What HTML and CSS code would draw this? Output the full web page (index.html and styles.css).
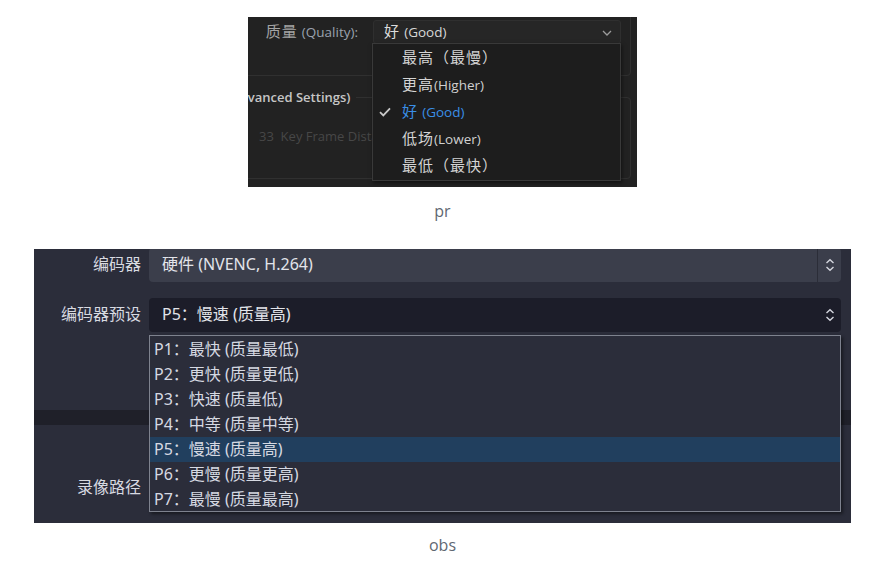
FILE: index.html
```html
<!DOCTYPE html>
<html lang="zh">
<head>
<meta charset="utf-8">
<title>pr / obs</title>
<link rel="stylesheet" href="styles.css">
</head>
<body>
<div class="page">

  <div class="pr-shot">
    <div class="pr-group">
      <div class="pr-row">
        <span class="pr-label"><span class="cjk">质量</span> <span class="lat">(Quality):</span></span>
        <div class="pr-select">
          <span><span class="cjk">好</span> <span class="lat">(Good)</span></span>
          <svg class="pr-chev" width="10" height="6" viewBox="0 0 10 6"><path d="M1 1 L5 5 L9 1" fill="none" stroke="#9c9c9c" stroke-width="1.3"/></svg>
        </div>
      </div>
    </div>
    <div class="pr-adv">
      <span class="pr-legend">(Advanced Settings)</span>
      <div class="pr-adv-row">33&nbsp; Key Frame Distance</div>
    </div>

    <ul class="pr-menu">
      <li><span class="cjk">最高（最慢）</span></li>
      <li><span class="cjk">更高</span><span class="lat">(Higher)</span></li>
      <li class="sel">
        <svg class="pr-check" width="12" height="10" viewBox="0 0 12 10"><path d="M1 5.2 L4.3 8.4 L11 1.4" fill="none" stroke="#c8c8c8" stroke-width="1.8"/></svg>
        <span class="cjk">好</span> <span class="lat">(Good)</span>
      </li>
      <li><span class="cjk">低场</span><span class="lat">(Lower)</span></li>
      <li><span class="cjk">最低（最快）</span></li>
    </ul>
  </div>

  <div class="caption cap-pr">pr</div>

  <div class="obs-shot">
    <div class="obs-form">
      <div class="obs-row obs-row1">
        <span class="obs-label">编码器</span>
        <div class="obs-field obs-field-light">
          <span class="obs-value">硬件 (NVENC, H.264)</span>
          <span class="obs-btn obs-btn-sep">
            <svg width="10" height="14" viewBox="0 0 10 14"><path d="M1.5 5 L5 1.8 L8.5 5 M1.5 9 L5 12.2 L8.5 9" fill="none" stroke="#d4d6de" stroke-width="1.4"/></svg>
          </span>
        </div>
      </div>
      <div class="obs-row obs-row2">
        <span class="obs-label">编码器预设</span>
        <div class="obs-field obs-field-dark">
          <span class="obs-value">P5：慢速 (质量高)</span>
          <span class="obs-btn">
            <svg width="10" height="14" viewBox="0 0 10 14"><path d="M1.5 5 L5 1.8 L8.5 5 M1.5 9 L5 12.2 L8.5 9" fill="none" stroke="#d4d6de" stroke-width="1.4"/></svg>
          </span>
        </div>
      </div>
      <div class="obs-band"></div>
      <div class="obs-row obs-row3">
        <span class="obs-label">录像路径</span>
        <div class="obs-field obs-field-dark"></div>
      </div>
    </div>

    <ul class="obs-list">
      <li>P1：最快 (质量最低)</li>
      <li>P2：更快 (质量更低)</li>
      <li>P3：快速 (质量低)</li>
      <li>P4：中等 (质量中等)</li>
      <li class="sel">P5：慢速 (质量高)</li>
      <li>P6：更慢 (质量更高)</li>
      <li>P7：最慢 (质量最高)</li>
    </ul>
  </div>

  <div class="caption cap-obs">obs</div>

</div>
</body>
</html>
```

FILE: styles.css
```css
* { box-sizing: border-box; }

html, body {
  margin: 0;
  padding: 0;
  background: #ffffff;
}

.page {
  display: flex;
  flex-direction: column;
  align-items: center;
  padding-left: 14px;
  padding-top: 17px;
}

/* ---------- PR screenshot ---------- */
.pr-shot {
  position: relative;
  width: 389px;
  height: 170px;
  background: #222222;
  overflow: hidden;
  font-family: "Open Sans", "Noto Sans CJK SC", sans-serif;
  color: #a8a8a8;
}

.pr-shot .cjk {
  font-family: "Noto Sans CJK SC", sans-serif;
  font-size: 15px;
  letter-spacing: 1px;
}

.pr-shot .lat {
  font-family: "Open Sans", sans-serif;
  font-size: 13.5px;
}

.pr-group {
  margin: -10px 0 0 -10px;
  width: 393px;
  height: 69px;
  border: 1px solid #303030;
  border-radius: 4px;
  padding-top: 12px;
}

.pr-row {
  display: flex;
  align-items: center;
}

.pr-label {
  width: 121px;
  text-align: right;
  padding-right: 2px;
  color: #a4a4a4;
  line-height: 21px;
  margin-top: -2px;
  white-space: nowrap;
}

.pr-label .lat { color: #9aa3ae; }

.pr-select {
  margin-left: 13px;
  width: 248px;
  height: 24px;
  background: #262626;
  border: 1px solid #2f2f2f;
  border-radius: 3px;
  display: flex;
  align-items: center;
  justify-content: space-between;
  padding: 0 8px 2px 10px;
  color: #dcdcdc;
}

.pr-select .lat { color: #d8d8d8; }

.pr-chev { margin-top: 3px; }

.pr-adv {
  position: relative;
  margin: 21px 0 0 -10px;
  width: 393px;
  height: 82px;
  border: 1px solid #303030;
  border-radius: 4px;
}

.pr-legend {
  position: absolute;
  top: -11px;
  left: -12px;
  padding-right: 6px;
  background: #222222;
  font-family: "Open Sans", sans-serif;
  font-size: 13px;
  font-weight: 600;
  color: #c6c6c6;
  line-height: 20px;
  white-space: nowrap;
}

.pr-adv-row {
  margin: 29px 0 0 20px;
  font-family: "Open Sans", sans-serif;
  font-size: 13px;
  color: #474747;
  white-space: nowrap;
}

.pr-menu {
  position: absolute;
  left: 124px;
  top: 26px;
  width: 249px;
  height: 138px;
  margin: 0;
  padding: 0;
  list-style: none;
  background: #1d1d1d;
  border: 1px solid #393939;
  box-shadow: 1px 2px 4px rgba(0, 0, 0, 0.5);
}

.pr-menu li {
  position: relative;
  height: 27px;
  line-height: 26px;
  padding-left: 29px;
  color: #d4d4d4;
  white-space: nowrap;
}

.pr-menu li .lat { color: #d0d0d0; }

.pr-menu li.sel,
.pr-menu li.sel .lat { color: #3a8fe6; }

.pr-check {
  position: absolute;
  left: 6px;
  top: 9px;
}

/* ---------- captions ---------- */
.caption {
  font-family: "Open Sans", sans-serif;
  font-size: 16px;
  line-height: 24px;
  color: #5f6772;
  text-align: center;
}

.cap-pr { margin-top: 12px; }
.cap-obs { margin-top: 10px; }

/* ---------- OBS screenshot ---------- */
.obs-shot {
  position: relative;
  margin-top: 26px;
  width: 817px;
  height: 274px;
  background: #2b2d3a;
  overflow: hidden;
  font-family: "Noto Sans", "Noto Sans CJK SC", sans-serif;
  font-size: 16px;
  color: #dcdee5;
}

.obs-form {
  display: flex;
  flex-direction: column;
  padding-right: 10px;
}

.obs-row {
  display: flex;
  align-items: center;
  gap: 8px;
}

.obs-row1 { margin-top: -1px; }
.obs-row2 { margin-top: 16px; }
.obs-row3 { margin-top: 46px; }

.obs-label {
  width: 107px;
  flex-shrink: 0;
  text-align: right;
  color: #d8dae1;
  line-height: 22px;
  margin-top: -2px;
}

.obs-field {
  flex: 1;
  height: 34px;
  border-radius: 4px;
  display: flex;
  align-items: center;
}

.obs-field-light { background: #3b3e4b; }
.obs-field-dark { background: #1c1d29; }

.obs-value {
  flex: 1;
  padding-left: 13px;
  color: #e2e4ea;
  white-space: nowrap;
  line-height: 22px;
  margin-top: -2px;
}

.obs-btn {
  width: 24px;
  height: 100%;
  display: flex;
  align-items: center;
  justify-content: center;
  padding-left: 1px;
}

.obs-btn-sep { border-left: 1px solid #2b2d38; }

.obs-band {
  margin: 78px -10px 0 0;
  height: 15px;
  background: #1f2029;
}

.obs-list {
  position: absolute;
  left: 115px;
  top: 86px;
  width: 692px;
  height: 177px;
  margin: 0;
  padding: 1px 0 0 0;
  list-style: none;
  background: #2b2d3a;
  border: 1px solid #7e828e;
  box-shadow: 2px 2px 3px rgba(0, 0, 0, 0.45);
}

.obs-list li {
  height: 25px;
  line-height: 25px;
  padding-left: 4px;
  color: #d6d9e2;
  white-space: nowrap;
}

.obs-list li.sel { background: #213f5e; }
```
